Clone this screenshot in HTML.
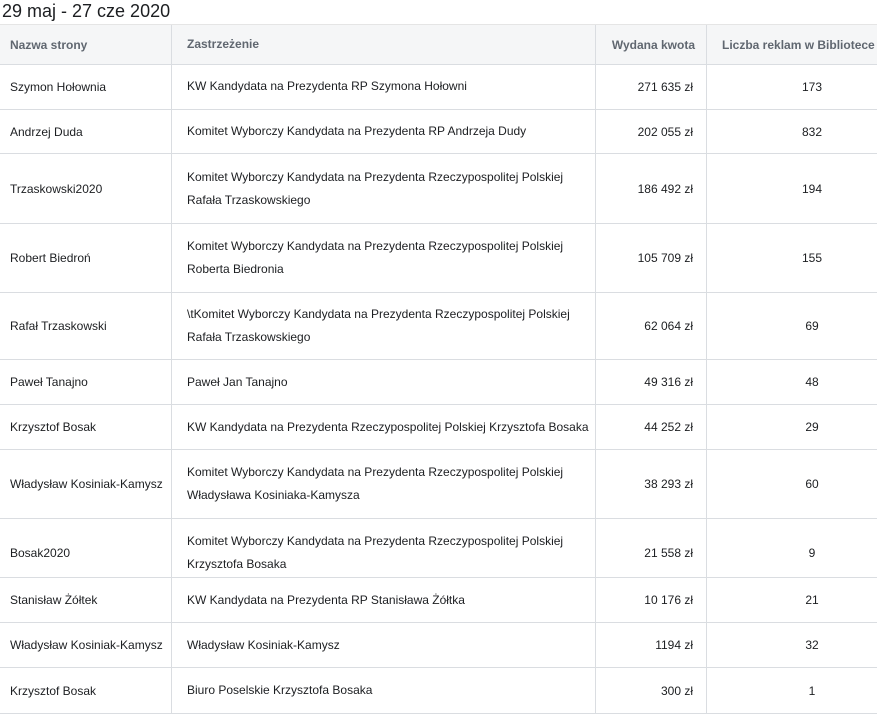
<!DOCTYPE html>
<html><head><meta charset="utf-8"><style>
body{margin:0;background:#fff;font-family:"Liberation Sans",Arial,sans-serif;width:877px;height:717px;overflow:hidden;position:relative}
.t{position:absolute;left:2px;top:0;font-size:18px;color:#1c1e21;line-height:22px}
.row{position:absolute;left:0;width:917px;border-bottom:1px solid #dadde1;font-size:12px;color:#1c1e21}
.c{position:absolute;top:0;bottom:0;display:flex;align-items:center;box-sizing:border-box}
.c1{left:0;width:172px;padding-left:10px;border-right:1px solid #dadde1}
.c2{left:172px;width:424px;padding-left:15px;border-right:1px solid #dadde1;line-height:23px}
.c3{left:596px;width:111px;padding-right:13px;justify-content:flex-end;border-right:1px solid #dadde1}
.c4{left:707px;width:210px;justify-content:center}
.h{background:#f5f6f7;color:#606770;font-weight:bold;border-top:1px solid #e5e5e5}
.h .c4{justify-content:flex-start;padding-left:15px}
</style></head><body>
<div class="t">29 maj - 27 cze 2020</div>
<div class="row h" style="top:24px;height:39px"><div class="c c1">Nazwa strony</div><div class="c c2">Zastrzeżenie</div><div class="c c3" style="padding-right:11px">Wydana kwota</div><div class="c c4">Liczba reklam w Bibliotece</div></div>
<div class="row" style="top:64px;height:45px"><div class="c c1">Szymon Hołownia</div><div class="c c2">KW Kandydata na Prezydenta RP Szymona Hołowni</div><div class="c c3">271 635 zł</div><div class="c c4">173</div></div>
<div class="row" style="top:110px;height:43px"><div class="c c1">Andrzej Duda</div><div class="c c2">Komitet Wyborczy Kandydata na Prezydenta RP Andrzeja Dudy</div><div class="c c3">202 055 zł</div><div class="c c4">832</div></div>
<div class="row" style="top:154px;height:69px"><div class="c c1">Trzaskowski2020</div><div class="c c2">Komitet Wyborczy Kandydata na Prezydenta Rzeczypospolitej Polskiej<br>Rafała Trzaskowskiego</div><div class="c c3">186 492 zł</div><div class="c c4">194</div></div>
<div class="row" style="top:224px;height:68px"><div class="c c1">Robert Biedroń</div><div class="c c2">Komitet Wyborczy Kandydata na Prezydenta Rzeczypospolitej Polskiej<br>Roberta Biedronia</div><div class="c c3">105 709 zł</div><div class="c c4">155</div></div>
<div class="row" style="top:293px;height:66px"><div class="c c1">Rafał Trzaskowski</div><div class="c c2">\tKomitet Wyborczy Kandydata na Prezydenta Rzeczypospolitej Polskiej<br>Rafała Trzaskowskiego</div><div class="c c3">62 064 zł</div><div class="c c4">69</div></div>
<div class="row" style="top:360px;height:44px"><div class="c c1">Paweł Tanajno</div><div class="c c2">Paweł Jan Tanajno</div><div class="c c3">49 316 zł</div><div class="c c4">48</div></div>
<div class="row" style="top:405px;height:44px"><div class="c c1">Krzysztof Bosak</div><div class="c c2">KW Kandydata na Prezydenta Rzeczypospolitej Polskiej Krzysztofa Bosaka</div><div class="c c3">44 252 zł</div><div class="c c4">29</div></div>
<div class="row" style="top:450px;height:68px"><div class="c c1">Władysław Kosiniak-Kamysz</div><div class="c c2">Komitet Wyborczy Kandydata na Prezydenta Rzeczypospolitej Polskiej<br>Władysława Kosiniaka-Kamysza</div><div class="c c3">38 293 zł</div><div class="c c4">60</div></div>
<div class="row" style="top:519px;height:58px"><div class="c c1" style="padding-top:10px">Bosak2020</div><div class="c c2" style="padding-top:10px">Komitet Wyborczy Kandydata na Prezydenta Rzeczypospolitej Polskiej<br>Krzysztofa Bosaka</div><div class="c c3" style="padding-top:10px">21 558 zł</div><div class="c c4" style="padding-top:10px">9</div></div>
<div class="row" style="top:578px;height:44px"><div class="c c1">Stanisław Żółtek</div><div class="c c2">KW Kandydata na Prezydenta RP Stanisława Żółtka</div><div class="c c3">10 176 zł</div><div class="c c4">21</div></div>
<div class="row" style="top:623px;height:44px"><div class="c c1">Władysław Kosiniak-Kamysz</div><div class="c c2">Władysław Kosiniak-Kamysz</div><div class="c c3">1194 zł</div><div class="c c4">32</div></div>
<div class="row" style="top:668px;height:45px"><div class="c c1">Krzysztof Bosak</div><div class="c c2">Biuro Poselskie Krzysztofa Bosaka</div><div class="c c3">300 zł</div><div class="c c4">1</div></div>
</body></html>
